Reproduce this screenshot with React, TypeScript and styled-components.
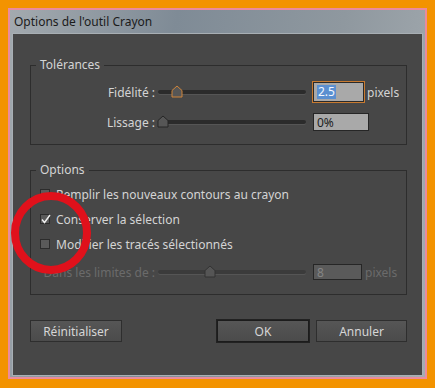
import React from 'react';
import styled, { createGlobalStyle, css } from 'styled-components';

const GlobalStyle = createGlobalStyle`
    html, body {
        margin: 0;
        padding: 0;
        background: #f39300;
    }
    body {
        font-family: 'Noto Sans', 'Open Sans', sans-serif;
    }
`;

const Page = styled.div`
    width: 435px;
    height: 388px;
    box-sizing: border-box;
    padding: 8px 8px 9px 8px;
    position: relative;
`;

const Window = styled.div`
    height: 100%;
    box-sizing: border-box;
    display: flex;
    flex-direction: column;
    border: 2px solid #ea8b9c;
    background: linear-gradient(100deg, #a3aaaf 0%, #7f8b96 35%, #8f989f 70%, #a5acb1 100%);
`;

const TitleBar = styled.div`
    height: 23px;
    display: flex;
    align-items: center;
    padding-left: 4px;
    font-size: 12px;
    color: #1b1b1b;
`;

const Body = styled.div`
    flex: 1;
    margin: 0 2px 1px 2px;
    border: 1px solid #a8afb4;
    background: #474747;
    padding: 23px 15px 0 17px;
    display: flex;
    flex-direction: column;
    color: #d4d4d4;
    font-size: 12px;
`;

const Group = styled.fieldset<{ $top?: number; $bottom: number }>`
    margin: ${(p) => p.$top ?? 0}px 0 0 0;
    padding: 0 0 ${(p) => p.$bottom}px 0;
    border: 1px solid #2d2d2d;
    min-width: 0;
`;

const Legend = styled.legend`
    margin-left: 5px;
    padding: 0 4px;
    line-height: 16px;
    color: #d4d4d4;
`;

const Rows = styled.div<{ $gap: number; $pad: number }>`
    display: flex;
    flex-direction: column;
    gap: ${(p) => p.$gap}px;
    padding-top: ${(p) => p.$pad}px;
`;

const FieldRow = styled.div<{ $disabled?: boolean }>`
    display: flex;
    align-items: center;
    height: 20px;
    color: ${(p) => (p.$disabled ? '#6b6b6b' : '#d4d4d4')};
`;

const Label = styled.span`
    width: 124px;
    text-align: right;
    white-space: nowrap;
`;

const Slider = styled.div`
    position: relative;
    width: 148px;
    height: 20px;
    margin-left: 3px;
    display: flex;
    align-items: center;
`;

const Track = styled.div<{ $disabled?: boolean }>`
    width: 100%;
    height: 4px;
    border-radius: 2px;
    background: ${(p) => (p.$disabled ? '#3b3b3b' : '#2b2b2b')};
    box-shadow: 0 1px 0 #555;
`;

const ThumbIcon = styled.svg`
    position: absolute;
    top: 3px;
`;

const Field = styled.div<{ $w: number; $h: number; $focus?: boolean; $disabled?: boolean }>`
    width: ${(p) => p.$w}px;
    height: ${(p) => p.$h}px;
    box-sizing: border-box;
    margin-left: 7px;
    display: flex;
    align-items: center;
    padding-left: 3px;
    background: ${(p) => (p.$disabled ? '#5a5a5a' : '#a9a9a9')};
    color: ${(p) => (p.$disabled ? '#858585' : '#1e1e1e')};
    border: 1px solid #262626;
    font-size: 12px;
    ${(p) =>
        p.$focus &&
        css`
            border: 1px solid #2a2a2a;
            box-shadow: 0 0 0 1px #c87a30;
        `}
`;

const Selected = styled.span`
    background: #5b8fd0;
    color: #f4f8ff;
    padding: 0 1px;
    line-height: 14px;
`;

const Unit = styled.span`
    margin-left: 3px;
`;

const CheckRow = styled.label`
    display: flex;
    align-items: center;
    height: 18px;
    padding-left: 9px;
    gap: 6px;
    white-space: nowrap;
`;

const Box = styled.span`
    width: 10px;
    height: 10px;
    box-sizing: border-box;
    border: 1px solid #2c2c2c;
    background: #5a5a5a;
    position: relative;
    display: inline-block;
`;

const Tick = styled.svg`
    position: absolute;
    left: -1px;
    top: -2px;
`;

const ButtonBar = styled.div`
    display: flex;
    justify-content: space-between;
    margin-top: 25px;
`;

const ButtonGroup = styled.div`
    display: flex;
    gap: 7px;
`;

const Button = styled.button<{ $w: number; $primary?: boolean }>`
    width: ${(p) => p.$w}px;
    height: 22px;
    box-sizing: border-box;
    border: 1px solid #2e2e2e;
    background: linear-gradient(#565656, #4b4b4b);
    color: #d6d6d6;
    font-family: inherit;
    font-size: 12px;
    padding: 0;
    ${(p) =>
        p.$primary &&
        css`
            border-color: #1c1c1c;
            box-shadow: 0 0 0 1px #222;
        `}
`;

const Annotation = styled.svg`
    position: absolute;
    left: 0;
    top: 0;
    pointer-events: none;
`;

const Thumb = ({ pos, active, disabled }: { pos: number; active?: boolean; disabled?: boolean }) => (
    <ThumbIcon width="12" height="13" viewBox="0 0 12 13" style={{ left: pos }}>
        <path
            d="M1 5.5 L6 1 L11 5.5 L11 12 L1 12 Z"
            fill={disabled ? '#555' : '#565656'}
            stroke={active ? '#d0853a' : disabled ? '#333' : '#262626'}
            strokeWidth="1"
        />
    </ThumbIcon>
);

const Check = ({ checked, children }: { checked?: boolean; children: React.ReactNode }) => (
    <CheckRow>
        <Box>
            {checked && (
                <Tick width="12" height="12" viewBox="0 0 12 12">
                    <path d="M2 6.5 L4.5 9.5 L10 2" fill="none" stroke="#f0f0f0" strokeWidth="1.4" />
                </Tick>
            )}
        </Box>
        <span>{children}</span>
    </CheckRow>
);

export default function App() {
    return (
        <Page>
            <GlobalStyle />
            <Window>
                <TitleBar>Options de l'outil Crayon</TitleBar>
                <Body>
                    <Group $bottom={12}>
                        <Legend>Tolérances</Legend>
                        <Rows $gap={10} $pad={9}>
                            <FieldRow>
                                <Label>Fidélité :</Label>
                                <Slider>
                                    <Track />
                                    <Thumb pos={13} active />
                                </Slider>
                                <Field $w={51} $h={20} $focus>
                                    <Selected>2.5</Selected>
                                </Field>
                                <Unit>pixels</Unit>
                            </FieldRow>
                            <FieldRow>
                                <Label>Lissage :</Label>
                                <Slider>
                                    <Track />
                                    <Thumb pos={-1} />
                                </Slider>
                                <Field $w={56} $h={18}>0%</Field>
                            </FieldRow>
                        </Rows>
                    </Group>

                    <Group $top={17} $bottom={12}>
                        <Legend>Options</Legend>
                        <Rows $gap={7} $pad={7}>
                            <Check>Remplir les nouveaux contours au crayon</Check>
                            <Check checked>Conserver la sélection</Check>
                            <Check>Modifier les tracés sélectionnés</Check>
                            <FieldRow $disabled style={{ marginTop: 2 }}>
                                <Label>Dans les limites de :</Label>
                                <Slider>
                                    <Track $disabled />
                                    <Thumb pos={46} disabled />
                                </Slider>
                                <Field $w={49} $h={16} $disabled>
                                    8
                                </Field>
                                <Unit>pixels</Unit>
                            </FieldRow>
                        </Rows>
                    </Group>

                    <ButtonBar>
                        <Button $w={92}>Réinitialiser</Button>
                        <ButtonGroup>
                            <Button $w={92} $primary>
                                OK
                            </Button>
                            <Button $w={91}>Annuler</Button>
                        </ButtonGroup>
                    </ButtonBar>
                </Body>
            </Window>
            <Annotation width="435" height="388">
                <ellipse cx="51" cy="233" rx="36" ry="37" fill="none" stroke="#e0111b" strokeWidth="8" />
            </Annotation>
        </Page>
    );
}
